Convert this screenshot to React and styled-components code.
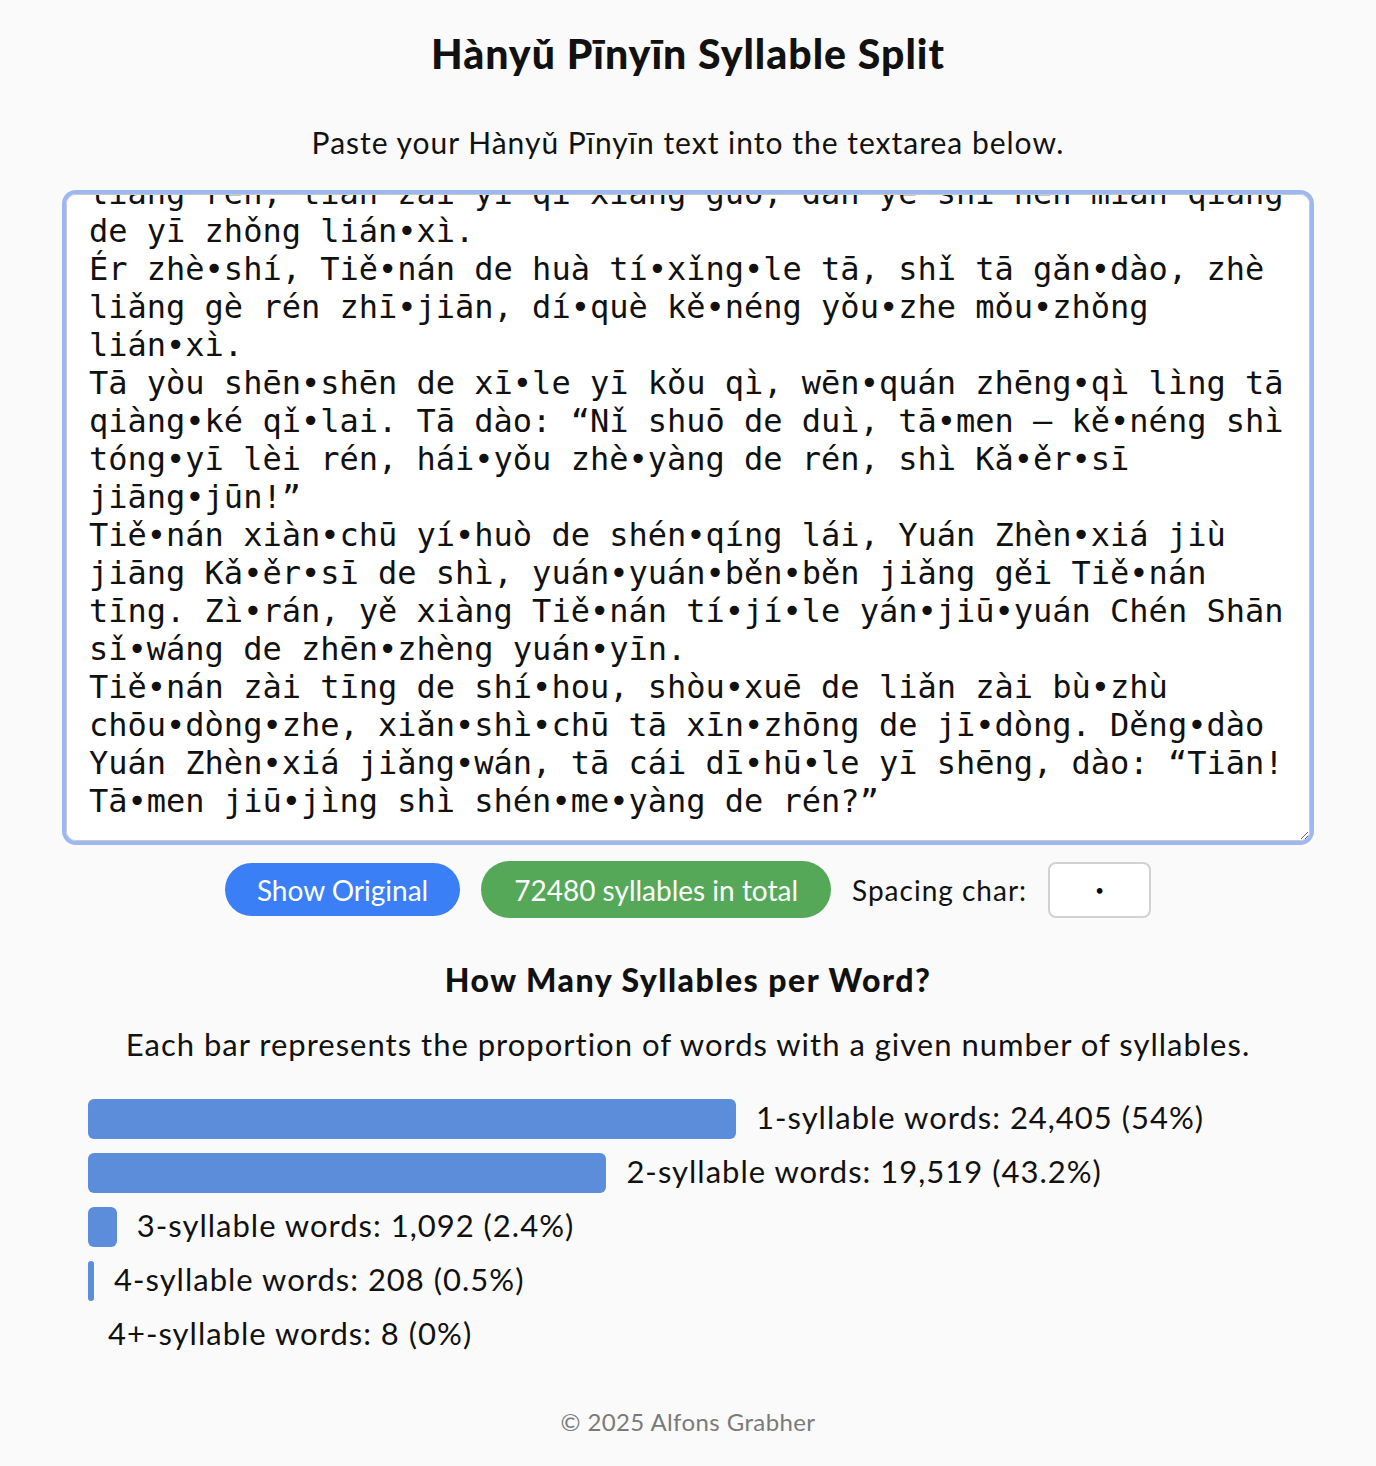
import React, { useLayoutEffect, useRef } from 'react';
import styled, { createGlobalStyle } from 'styled-components';

const GlobalStyle = createGlobalStyle`
    body {
        margin: 0;
        background: #fafafa;
        color: #111;
        font-family: Lato, "Noto Sans", sans-serif;
    }
`;

const Page = styled.div`
    display: flex;
    flex-direction: column;
    align-items: center;
    padding-top: 30px;
`;

const Title = styled.h1`
    margin: 0;
    font-size: 41px;
    line-height: 48px;
    font-weight: 900;
    letter-spacing: 1px;
`;

const Intro = styled.p`
    margin: 46px 0 0;
    font-size: 30px;
    line-height: 36px;
    letter-spacing: 1px;
`;

const Editor = styled.textarea`
    box-sizing: border-box;
    width: 1244px;
    height: 647px;
    margin-top: 34px;
    padding: 20px 22px;
    border: 1px solid #c9c9c9;
    border-radius: 10px;
    outline: none;
    box-shadow: 0 0 0 4px #9db7f1;
    font-family: "DejaVu Sans Mono", monospace;
    font-size: 32px;
    line-height: 38px;
    color: #111;
    background: #fff;
    caret-color: #2f6fe8;
    resize: vertical;
`;

const Controls = styled.div`
    display: flex;
    align-items: center;
    gap: 21px;
    margin-top: 20px;
`;

const Pill = styled.button`
    border: none;
    border-radius: 30px;
    padding: 0 ${(p) => (p.$tall ? '33px' : '32px')};
    height: ${(p) => (p.$tall ? '57px' : '53px')};
    background: ${(p) => p.$bg};
    color: #fff;
    font-family: inherit;
    font-size: 28px;
`;

const Label = styled.span`
    font-size: 28px;
    letter-spacing: 1px;
`;

const CharInput = styled.input`
    box-sizing: border-box;
    width: 103px;
    height: 56px;
    border: 2px solid #d2d2d2;
    border-radius: 8px;
    background: #fff;
    text-align: center;
    font-size: 15px;
    font-family: inherit;
    color: #000;
`;

const Heading = styled.h2`
    margin: 44px 0 0;
    font-size: 32px;
    line-height: 36px;
    font-weight: 900;
    letter-spacing: 1.5px;
`;

const Note = styled.p`
    margin: 28px 0 0;
    font-size: 31px;
    line-height: 36px;
    letter-spacing: 1px;
`;

const Chart = styled.div`
    width: 1200px;
    margin-top: 37px;
    display: flex;
    flex-direction: column;
    gap: 14px;
`;

const Row = styled.div`
    display: flex;
    align-items: center;
    gap: 20px;
    height: 40px;
`;

const Bar = styled.div`
    flex: none;
    height: 40px;
    border-radius: 6px;
    background: #5b8dda;
`;

const RowLabel = styled.span`
    font-size: 31px;
    letter-spacing: 1px;
    white-space: nowrap;
    margin-top: -4px;
`;

const Footer = styled.footer`
    margin: 52px 0 30px;
    font-size: 24px;
    letter-spacing: 0.4px;
    color: #7a7a7a;
`;

const pinyin = [
    'Kǎ•ěr•sī shì yī gè shén•mì de rén, méi•yǒu rén zhī•dào tā cóng nǎ•lǐ lái, yě méi•yǒu rén zhī•dào tā yào dào nǎ•lǐ qù.',
    'Chén Shān sǐ hòu, yán•jiū•suǒ lǐ de měi yī gè rén dōu biàn•de chén•mò qǐ•lai, sì•hū shuí yě bù yuàn•yì tí•qǐ nà jiàn shì.',
    'Yuán Zhèn•xiá yī•zhí yǐ•wéi, Kǎ•ěr•sī hé Chén Shān zhè yàng de liǎng rén, tiān zài yī qǐ xiǎng guò, dàn yě shì hěn miǎn qiǎng de yī zhǒng lián•xì.',
    'Ér zhè•shí, Tiě•nán de huà tí•xǐng•le tā, shǐ tā gǎn•dào, zhè liǎng gè rén zhī•jiān, dí•què kě•néng yǒu•zhe mǒu•zhǒng lián•xì.',
    'Tā yòu shēn•shēn de xī•le yī kǒu qì, wēn•quán zhēng•qì lìng tā qiàng•ké qǐ•lai. Tā dào: “Nǐ shuō de duì, tā•men — kě•néng shì tóng•yī lèi rén, hái•yǒu zhè•yàng de rén, shì Kǎ•ěr•sī jiāng•jūn!”',
    'Tiě•nán xiàn•chū yí•huò de shén•qíng lái, Yuán Zhèn•xiá jiù jiāng Kǎ•ěr•sī de shì, yuán•yuán•běn•běn jiǎng gěi Tiě•nán tīng. Zì•rán, yě xiàng Tiě•nán tí•jí•le yán•jiū•yuán Chén Shān sǐ•wáng de zhēn•zhèng yuán•yīn.',
    'Tiě•nán zài tīng de shí•hou, shòu•xuē de liǎn zài bù•zhù chōu•dòng•zhe, xiǎn•shì•chū tā xīn•zhōng de jī•dòng. Děng•dào Yuán Zhèn•xiá jiǎng•wán, tā cái dī•hū•le yī shēng, dào: “Tiān! Tā•men jiū•jìng shì shén•me•yàng de rén?”',
].join('\n');

const counts = [
    { label: '1-syllable words', value: '24,405', pct: 54 },
    { label: '2-syllable words', value: '19,519', pct: 43.2 },
    { label: '3-syllable words', value: '1,092', pct: 2.4 },
    { label: '4-syllable words', value: '208', pct: 0.5 },
    { label: '4+-syllable words', value: '8', pct: 0 },
];

const App = () => {
    const editorRef = useRef(null);

    useLayoutEffect(() => {
        const el = editorRef.current;
        el.focus();
        el.setSelectionRange(el.value.length, el.value.length);
        el.scrollTop = el.scrollHeight; // am Ende anzeigen
    }, []);

    return (
        <>
            <GlobalStyle />
            <Page>
                <Title>Hànyǔ Pīnyīn Syllable Split</Title>
                <Intro>Paste your Hànyǔ Pīnyīn text into the textarea below.</Intro>
                <Editor ref={editorRef} defaultValue={pinyin} spellCheck={false} />
                <Controls>
                    <Pill $bg="#3a7ff6">Show Original</Pill>
                    <Pill $bg="#56a859" $tall>72480 syllables in total</Pill>
                    <Label>Spacing char:</Label>
                    <CharInput defaultValue="•" />
                </Controls>
                <Heading>How Many Syllables per Word?</Heading>
                <Note>Each bar represents the proportion of words with a given number of syllables.</Note>
                <Chart>
                    {counts.map((c) => (
                        <Row key={c.label}>
                            <Bar style={{ width: `${c.pct}%` }} />
                            <RowLabel>{c.label}: {c.value} ({c.pct}%)</RowLabel>
                        </Row>
                    ))}
                </Chart>
                <Footer>© 2025 Alfons Grabher</Footer>
            </Page>
        </>
    );
};

export default App;
